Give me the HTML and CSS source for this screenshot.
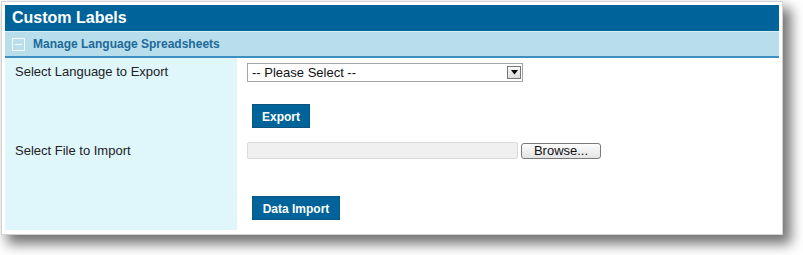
FILE: index.html
```html
<!DOCTYPE html>
<html>
<head>
<meta charset="utf-8">
<link rel="stylesheet" href="styles.css">
</head>
<body>
<div class="panel">
  <div class="title">Custom Labels</div>
  <div class="section">
    <span class="toggle"><span class="dash"></span></span>
    <span class="section-text">Manage Language Spreadsheets</span>
  </div>
  <div class="body">
    <div class="labels">
      <div class="label label-export">Select Language to Export</div>
      <div class="label label-import">Select File to Import</div>
    </div>
    <div class="fields">
      <div class="select">
        <span class="select-text">-- Please Select --</span>
        <span class="select-arrow"><svg width="9" height="5" viewBox="0 0 9 5"><path d="M1 0 H8 L4.5 4.5 Z" fill="#000"/></svg></span>
      </div>
      <div class="btn btn-export">Export</div>
      <div class="file-row">
        <div class="file-box"></div>
        <div class="browse">Browse...</div>
      </div>
      <div class="btn btn-import">Data Import</div>
    </div>
  </div>
</div>
</body>
</html>
```
FILE: styles.css
```css
html, body {
  margin: 0;
  padding: 0;
  background: #fff;
}
body {
  font-family: "Liberation Sans", Arial, sans-serif;
  padding: 1px 0 0 1px;
  height: 255px;
  box-sizing: border-box;
  overflow: hidden;
}
.panel {
  width: 774px;
  border: 1px solid #d2d2d2;
  padding: 3px 3px 4px 3px;
  background: #fff;
  box-shadow: 7px 8px 12px 1px rgba(0, 0, 0, 0.55);
}
.title {
  height: 26px;
  background: #00649a;
  color: #fff;
  font-weight: bold;
  font-size: 16px;
  line-height: 26px;
  padding-left: 7px;
}
.section {
  height: 24px;
  background: #b8deeb;
  border-top: 1px solid #d7eef5;
  border-bottom: 2px solid #3c8fc0;
  display: flex;
  align-items: center;
  padding-left: 7px;
}
.toggle {
  width: 11px;
  height: 11px;
  border: 1px solid #f4fbfd;
  display: flex;
  align-items: center;
  justify-content: center;
  margin-right: 8px;
}
.dash {
  width: 7px;
  height: 1px;
  background: #f4fbfd;
}
.section-text {
  color: #20699a;
  font-weight: bold;
  font-size: 12px;
}
.body {
  display: flex;
  height: 172px;
}
.labels {
  width: 232px;
  background: #dff6fb;
  font-size: 13px;
  color: #222;
  padding-left: 10px;
  box-sizing: border-box;
}
.label-export {
  margin-top: 6px;
}
.label-import {
  margin-top: 64px;
}
.fields {
  padding-left: 10px;
}
.select {
  margin-top: 5px;
  width: 274px;
  height: 17px;
  border: 1px solid #a5a5a5;
  display: flex;
  align-items: center;
  justify-content: space-between;
  font-size: 13px;
  color: #111;
}
.select-text {
  padding-left: 4px;
}
.select-arrow {
  width: 14px;
  height: 13px;
  margin-right: 1px;
  border: 1px solid #777;
  box-sizing: border-box;
  background: linear-gradient(#f8f8f8, #dcdcdc);
  display: flex;
  align-items: center;
  justify-content: center;
}
.btn {
  background: #00649a;
  color: #fff;
  font-weight: bold;
  font-size: 12px;
  height: 24px;
  line-height: 24px;
  padding: 0 9px;
  margin-left: 5px;
  display: inline-block;
  box-sizing: border-box;
  border: 1px solid #0a547f;
}
.btn-export {
  margin-top: 22px;
  width: 58px;
  text-align: center;
}
.file-row {
  display: flex;
  align-items: center;
  margin-top: 14px;
}
.file-box {
  width: 271px;
  height: 17px;
  background: #f0f0f0;
  border: 1px solid #dadada;
  box-sizing: border-box;
  border-radius: 2px;
}
.browse {
  margin-left: 3px;
  width: 80px;
  height: 16px;
  box-sizing: border-box;
  border: 1px solid #7a7a7a;
  border-radius: 3px;
  background: linear-gradient(#fdfdfd, #e3e3e3);
  font-size: 13px;
  text-align: center;
  line-height: 14px;
  color: #111;
}
.btn-import {
  margin-top: 37px;
  width: 88px;
  text-align: center;
}
```
